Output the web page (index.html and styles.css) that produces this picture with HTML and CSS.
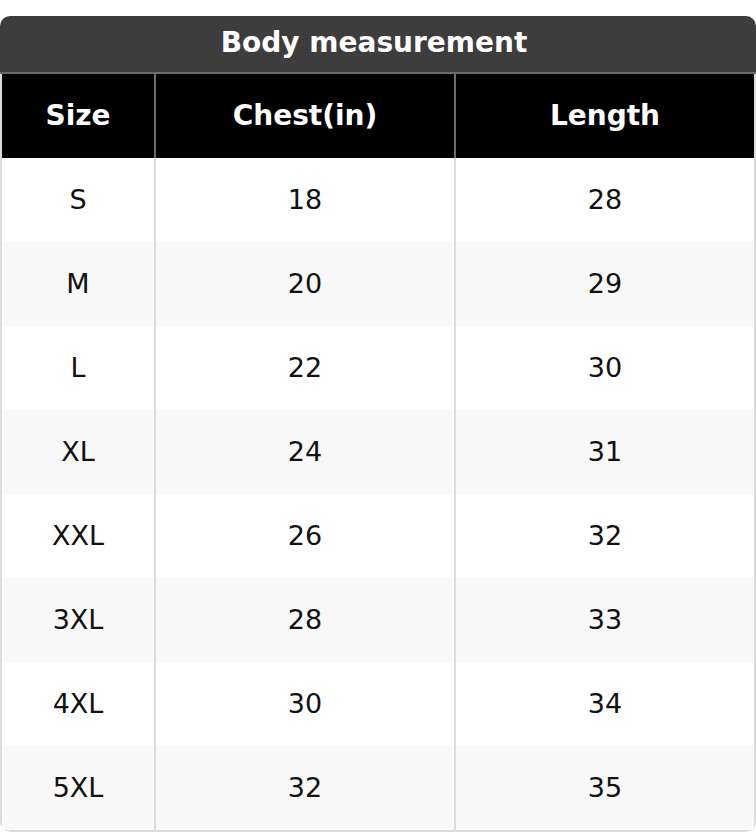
FILE: index.html
```html
<!DOCTYPE html>
<html>
<head>
<meta charset="utf-8">
<link rel="stylesheet" href="styles.css">
</head>
<body>
<div class="chart">
  <div class="title">Body measurement</div>
  <div class="grid">
    <div class="cell head">Size</div>
    <div class="cell head">Chest(in)</div>
    <div class="cell head">Length</div>

    <div class="cell">S</div><div class="cell">18</div><div class="cell">28</div>
    <div class="cell alt">M</div><div class="cell alt">20</div><div class="cell alt">29</div>
    <div class="cell">L</div><div class="cell">22</div><div class="cell">30</div>
    <div class="cell alt">XL</div><div class="cell alt">24</div><div class="cell alt">31</div>
    <div class="cell">XXL</div><div class="cell">26</div><div class="cell">32</div>
    <div class="cell alt">3XL</div><div class="cell alt">28</div><div class="cell alt">33</div>
    <div class="cell">4XL</div><div class="cell">30</div><div class="cell">34</div>
    <div class="cell alt">5XL</div><div class="cell alt">32</div><div class="cell alt">35</div>
  </div>
</div>
</body>
</html>
```

FILE: styles.css
```css
* { box-sizing: border-box; }
html, body { margin: 0; padding: 0; background: #fff; }
body { font-family: "DejaVu Sans", sans-serif; }

.chart {
  margin-top: 16px;
  width: 756px;
  border-radius: 10px;
  overflow: hidden;
}

.title {
  height: 58px;
  padding-bottom: 3px;
  padding-right: 8px;
  background: #3d3d3d;
  border-bottom: 2px solid #6b6b6b;
  color: #fff;
  font-weight: bold;
  font-size: 28px;
  display: flex;
  align-items: center;
  justify-content: center;
}

.grid {
  display: grid;
  grid-template-columns: 152px 300px 300px;
  grid-auto-rows: 84px;
  border: 2px solid #dcdcdc;
  border-top: none;
  border-radius: 0 0 10px 10px;
}

.cell {
  display: flex;
  align-items: center;
  justify-content: center;
  font-size: 27px;
  color: #111;
  background: #fff;
  padding-bottom: 1px;
}
.cell:not(:nth-child(3n+1)) { border-left: 2px solid #dcdcdc; }
.cell.alt { background: #f8f8f8; }

.cell.head {
  background: #000;
  color: #fff;
  font-weight: bold;
  font-size: 28px;
  padding-bottom: 2px;
}
.cell.head:not(:nth-child(3n+1)) { border-left-color: #6b6b6b; }
```
